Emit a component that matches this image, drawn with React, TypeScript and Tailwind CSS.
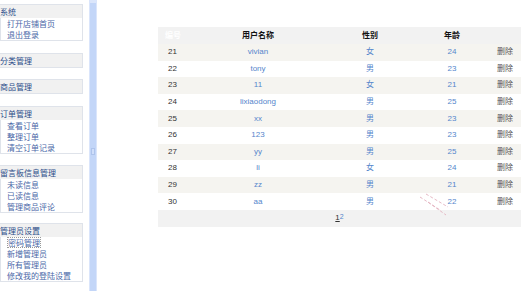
import React from "react";

const menus = [
  { title: "系统", items: ["打开店铺首页", "退出登录"], mt: "mt-[4px]" },
  { title: "分类管理", items: [], mt: "mt-[12px]" },
  { title: "商品管理", items: [], mt: "mt-[11px]" },
  { title: "订单管理", items: ["查看订单", "整理订单", "清空订单记录"], mt: "mt-[12px]" },
  { title: "留言板信息管理", items: ["未读信息", "已读信息", "管理商品评论"], mt: "mt-[11px]" },
  { title: "管理员设置", items: ["密码管理", "新增管理员", "所有管理员", "修改我的登陆设置"], mt: "mt-[10px]" },
];

const users = [
  { id: 21, name: "vivian", sex: "女", age: 24 },
  { id: 22, name: "tony", sex: "男", age: 23 },
  { id: 23, name: "11", sex: "女", age: 21 },
  { id: 24, name: "lixiaodong", sex: "男", age: 25 },
  { id: 25, name: "xx", sex: "男", age: 23 },
  { id: 26, name: "123", sex: "男", age: 23 },
  { id: 27, name: "yy", sex: "男", age: 25 },
  { id: 28, name: "li", sex: "女", age: 24 },
  { id: 29, name: "zz", sex: "男", age: 21 },
  { id: 30, name: "aa", sex: "男", age: 22 },
];

const font = { fontFamily: '"Liberation Sans", "Noto Sans CJK SC", sans-serif' };
const cjk = { fontFamily: '"Noto Sans CJK SC", sans-serif' };

export default function App() {
  return (
    <div className="flex w-[531px] h-[291px] bg-white overflow-hidden" style={font}>
      {/* Sidebar */}
      <div className="w-[83px] shrink-0 flex flex-col" style={cjk}>
        {menus.map((m, i) => (
          <div key={i} className={`${m.mt} border border-[#dfe3ea] bg-white`}>
            <div className="h-[13px] flex items-center bg-[#f1f1f1] text-[8px] leading-none text-[#2d4e8a] -ml-[1px] whitespace-nowrap overflow-hidden">
              {m.title}
            </div>
            {m.items.map((it, j) => (
              <div key={j} className="h-[11px] flex items-center pl-[6px] text-[8px] leading-none text-[#4b68a8] whitespace-nowrap">
                {it === "密码管理" ? (
                  <span className="border border-dotted border-[#999] leading-[9px]">{it}</span>
                ) : (
                  <span>{it}</span>
                )}
              </div>
            ))}
          </div>
        ))}
      </div>

      {/* Blue bar */}
      <div className="ml-[6px] w-[8px] shrink-0 h-full bg-[#c3d6f8] border-x border-[#dae5fb] flex flex-col items-center">
        <div className="w-full h-[3px] bg-[#dbe6fb]" />
        <div className="mt-[145px] w-[4px] h-[7px] border border-[#aec4ec] bg-[#cfdefa]" />
      </div>

      {/* Main */}
      <div className="ml-[61px] pt-[27px] w-[363px] shrink-0 relative">
        <table className="w-full border-collapse text-[8px]">
          <thead>
            <tr className="h-[17px] bg-[#f2f2f2]">
              <th className="w-[42px] text-left pl-[7px] font-bold text-white">编号</th>
              <th className="w-[116px] font-bold text-[#111]">用户名称</th>
              <th className="w-[108px] font-bold text-[#111]">性别</th>
              <th className="w-[56px] font-bold text-[#111]">年龄</th>
              <th />
            </tr>
          </thead>
          <tbody>
            {users.map((u, i) => (
              <tr key={u.id} className={`h-[16.6px] ${i % 2 === 0 ? "bg-[#f5f4f0]" : "bg-white"}`}>
                <td className="pl-[10px] text-[#333]">{u.id}</td>
                <td className="text-center text-[#5586cc]">{u.name}</td>
                <td className="text-center text-[#5586cc]">{u.sex}</td>
                <td className="text-center text-[#5586cc]">{u.age}</td>
                <td className="text-right pr-[8px] text-[#555]">删除</td>
              </tr>
            ))}
            <tr className="h-[17px] bg-[#f2f2f2]">
              <td colSpan={5} className="text-center">
                <span className="text-[#333] underline">1</span>
                <span className="text-[#5586cc] align-top text-[7px]">2</span>
              </td>
            </tr>
          </tbody>
        </table>
        <svg className="absolute left-[262px] top-[193px]" width="30" height="24" viewBox="0 0 30 24">
          <line x1="0" y1="4" x2="20" y2="17" stroke="#e0a8b8" strokeWidth="0.8" strokeDasharray="3 2" />
          <line x1="6" y1="1" x2="28" y2="14" stroke="#e0a8b8" strokeWidth="0.8" strokeDasharray="3 2" />
          <line x1="8" y1="9" x2="26" y2="22" stroke="#e0a8b8" strokeWidth="0.8" strokeDasharray="3 2" />
        </svg>
      </div>
    </div>
  );
}
